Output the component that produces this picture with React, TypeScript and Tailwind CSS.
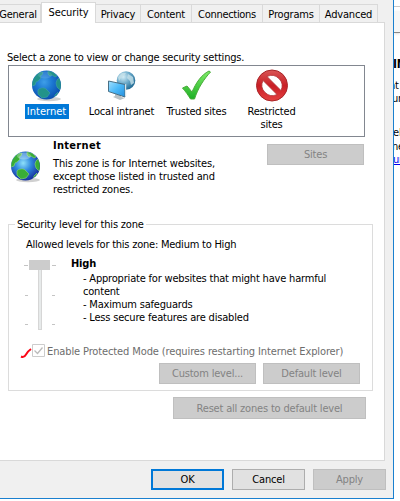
import type { ReactNode } from 'react';

function Button({ className, children }: { className: string; children: ReactNode }) {
  return (
    <button className={`flex items-center justify-center border leading-[13px] ${className}`}>{children}</button>
  );
}

const disabled = 'border-[#bfbfbf] bg-[#cccccc] text-[#838383]';

function Tab({ className, children }: { className: string; children: ReactNode }) {
  return (
    <div className={`flex h-[18px] items-center justify-center border-r border-t border-[#d9d9d9] pt-px leading-[13px] ${className}`}>
      {children}
    </div>
  );
}

function Globe({ id, tint }: { id: string; tint?: boolean }) {
  return (
    <svg width="32" height="32" viewBox="0 0 32 32" className="block">
      <defs>
        <radialGradient id={id} cx="0.42" cy="0.4" r="0.62">
          <stop offset="0" stopColor={tint ? '#3f9fe8' : '#8ee0fa'} />
          <stop offset="0.45" stopColor={tint ? '#1c78d2' : '#3089de'} />
          <stop offset="1" stopColor={tint ? '#0b4fae' : '#162f9c'} />
        </radialGradient>
        <clipPath id={id + 'c'}>
          <circle cx="15.5" cy="15" r="14.3" />
        </clipPath>
      </defs>
      <ellipse cx="18" cy="29" rx="12" ry="2.2" fill="#777" opacity="0.35" />
      <circle cx="15.5" cy="15" r="14.5" fill={`url(#${id})`} />
      <g clipPath={`url(#${id}c)`} fill={tint ? '#23938a' : '#39ad36'} stroke={tint ? '#3fa6a4' : '#91dc72'} strokeWidth="0.6">
        <path d="M1 12C3 6 7 2 12 2l-1 3-2 1 1 2-3 3-2 1-1 3-3 1z" />
        <path d="M17 1l5 1 4 4-2 1-3-2-2 1-2-2z" />
        <path d="M26 10l2-2 3 5v6l-2 1-3-3-1-4z" />
        <path d="M7 20c1-2 6-3 8-1l4 4-3 4-5 1-4-4z" />
        <path d="M24 25l3-3-1 4-3 3z" />
      </g>
      <ellipse cx="14" cy="5" rx="7" ry="3.5" fill="#fff" opacity={tint ? '0.12' : '0.3'} />
    </svg>
  );
}

function Intranet() {
  return (
    <svg width="32" height="32" viewBox="0 0 32 32" className="block">
      <defs>
        <radialGradient id="ig" cx="0.35" cy="0.3" r="0.75">
          <stop offset="0" stopColor="#d5eef7" />
          <stop offset="0.5" stopColor="#6baaca" />
          <stop offset="1" stopColor="#1c6690" />
        </radialGradient>
        <linearGradient id="is" x1="0" y1="0" x2="1" y2="1">
          <stop offset="0" stopColor="#a4e1ff" />
          <stop offset="0.5" stopColor="#4bb9f8" />
          <stop offset="1" stopColor="#258edc" />
        </linearGradient>
      </defs>
      <circle cx="20" cy="10.500" r="9.300" fill="url(#ig)" />
      <path d="M12 7l4-4 4 0-2 3-3 2-2 3zM22 4l5 3 1 6-3 2-1-4-3-3z" fill="#c4e0e9" opacity="0.8" />
      <path d="M9 24l6 1v2l4 1-5 2-7-3 2-1z" fill="#bac2c5" />
      <path d="M2.500 11L19 14.500V27L2.500 21.500z" fill="url(#is)" stroke="#496f85" />
      <path d="M19 14.500l1.200-.7V26L19 27z" fill="#d9e4e8" />
    </svg>
  );
}

function Check() {
  return (
    <svg width="32" height="32" viewBox="0 0 32 32" className="block">
      <defs>
        <linearGradient id="cg" x1="0" y1="0" x2="0" y2="1">
          <stop offset="0" stopColor="#80ed69" />
          <stop offset="1" stopColor="#1caf24" />
        </linearGradient>
      </defs>
      <path d="M1.500 18l4.500-2 5 6C15 13 20 5 28 1l1.500 1C23 9 17 18 13.500 29H9.500C7 25 5 22 1.500 18z" fill="url(#cg)" stroke="#48ac39" strokeWidth="1" />
    </svg>
  );
}

function Restricted() {
  return (
    <svg width="34" height="34" viewBox="0 0 34 34" className="block">
      <defs>
        <linearGradient id="rg" x1="0" y1="0" x2="0" y2="1">
          <stop offset="0" stopColor="#d95656" />
          <stop offset="0.5" stopColor="#c91e25" />
          <stop offset="1" stopColor="#e44140" />
        </linearGradient>
      </defs>
      <circle cx="17" cy="16.500" r="15.500" fill="url(#rg)" stroke="#a92629" />
      <path d="M12 7.500A10.500 10.500 0 0 1 26 21.500zM8 11.500A10.500 10.500 0 0 0 22 25.500z" fill="#fff" stroke="#ae3437" strokeWidth="0.8" />
    </svg>
  );
}

function Slider() {
  return (
    <svg width="34" height="72" viewBox="0 0 34 72" className="block" shapeRendering="crispEdges">
      <path d="M0 5.500h4M28 5.500h4M1 35.500h3M28 35.500h3M1 64.500h3M28 64.500h3" stroke="#c4c4c4" />
      <rect x="14.500" y="5.500" width="3" height="64" fill="#e7eaea" stroke="#d6d6d6" />
      <rect x="5" y="0" width="21" height="10" fill="#cccccc" />
    </svg>
  );
}

export default function App() {
  return (
    <div className="flex h-[501px] w-[400px] overflow-hidden whitespace-nowrap bg-white font-['DejaVu_Sans_Condensed','DejaVu_Sans',sans-serif] text-[11px] leading-[13px] tracking-[-0.19px] text-black">
      <div className="flex h-[499px] w-[394px] shrink-0 flex-col border-b border-r border-[#1a80cf] bg-[#f0f0f0]">
        <div className="flex h-[22px] items-end">
          <Tab className="w-[41px] pr-1">General</Tab>
          <div className="z-10 -mb-px flex h-[21px] w-[55px] items-center justify-center border-x border-t border-[#d9d9d9] bg-white pb-px tracking-[-0.1px]">Security</div>
          <Tab className="w-[45px]">Privacy</Tab>
          <Tab className="w-[51px]">Content</Tab>
          <Tab className="w-[71px] tracking-[-0.3px]">Connections</Tab>
          <Tab className="w-[57px]">Programs</Tab>
          <Tab className="w-[58px]">Advanced</Tab>
        </div>
        <div className="h-[439px] w-[385px] border-b border-r border-t border-[#d9d9d9] bg-white">
          <p className="mt-[28px] pl-[7px]">Select a zone to view or change security settings.</p>
          <div className="ml-2 mt-px flex h-[72px] w-[357px] border border-[#828790] pt-1">
            <div className="flex w-[75px] flex-col items-center">
              <Globe id="g1" tint />
              <span className="mt-0.5 flex h-[15px] w-[44px] items-center justify-center bg-[#0078d7] tracking-normal text-white">Internet</span>
            </div>
            <div className="flex w-[75px] flex-col items-center">
              <Intranet />
              <span className="mt-[3px]">Local intranet</span>
            </div>
            <div className="flex w-[75px] flex-col items-center">
              <Check />
              <span className="mt-[3px]">Trusted sites</span>
            </div>
            <div className="-mt-px flex w-[75px] flex-col items-center">
              <Restricted />
              <span className="mt-0.5 text-center">Restricted<br />sites</span>
            </div>
          </div>
          <div className="flex h-[81px]">
            <div className="w-[53px] pl-[10px] pt-[14px]"><Globe id="g2" /></div>
            <div className="w-[214px] pt-[2px]">
              <p className="font-bold tracking-[0.3px]">Internet</p>
              <p className="mt-[5px] tracking-[-0.14px]">This zone is for Internet websites,<br />except those listed in trusted and<br />restricted zones.</p>
            </div>
            <Button className={`mt-[7px] h-[21px] w-[97px] ${disabled}`}>Sites</Button>
          </div>
          <fieldset className="ml-2 h-[173px] w-[365px] border border-[#dcdcdc]">
            <legend className="ml-[6px] px-[2px]">Security level for this zone</legend>
            <p className="ml-[17px] mt-[7px] tracking-[-0.23px]">Allowed levels for this zone: Medium to High</p>
            <div className="ml-[15px] mt-[6px] flex h-[80px]">
              <div className="w-[47px] pt-[3px]"><Slider /></div>
              <div>
                <p className="font-bold">High</p>
                <p className="ml-3 mt-[2px]">- Appropriate for websites that might have harmful<br />content<br />- Maximum safeguards<br />- Less secure features are disabled</p>
              </div>
            </div>
            <div className="ml-[11px] mt-[7px] flex h-[15px] items-center text-[#6d6d6d]">
              <svg width="12" height="15" viewBox="0 0 12 15"><path d="M1 12.500q3 1.500 5-2t5-5.500" fill="none" stroke="#fb0717" strokeWidth="2" /></svg>
              <svg width="13" height="15" viewBox="0 0 13 15"><path d="M.5.5h12v12H.5z" fill="#fff" stroke="#ccc" /><path d="M2.500 6.500l3 3 5-6" fill="none" stroke="#bbb" strokeWidth="1.300" /></svg>
              <span className="ml-[2px] tracking-[-0.12px]">Enable Protected Mode (requires restarting Internet Explorer)</span>
            </div>
            <div className="ml-[150px] mt-[4px] flex gap-[7px]">
              <Button className={`h-[21px] w-[97px] ${disabled}`}>Custom level...</Button>
              <Button className={`h-[21px] w-[97px] ${disabled}`}>Default level</Button>
            </div>
          </fieldset>
          <Button className={`ml-[173px] mt-[6px] h-[22px] w-[193px] ${disabled}`}>Reset all zones to default level</Button>
        </div>
        <div className="ml-[151px] mt-[8px] flex gap-2">
          <Button className="h-[21px] w-[73px] border-2 border-[#0078d7] bg-[#e1e1e1]">OK</Button>
          <Button className="h-[21px] w-[73px] border-[#adadad] bg-[#e1e1e1]">Cancel</Button>
          <Button className={`h-[21px] w-[73px] ${disabled}`}>Apply</Button>
        </div>
      </div>
      <div className="w-[6px] overflow-hidden">
        <div className="h-[7px] border-b border-[#c9c9c9]" />
        <div className="mt-[4px] h-[22px] border-b border-[#888] bg-[#f6f6f6] shadow-sm" />
        <div className="mt-[25px] -ml-px text-[12px] font-bold">IN</div>
        <div className="mt-[8px] -ml-[5px]">nt</div>
        <div className="-ml-[2px]">ur</div>
        <div className="mt-[21px] -ml-px">el</div>
        <div className="mt-px -ml-[2px]">ne</div>
        <div className="-ml-px text-[#0000ee] underline">ur</div>
      </div>
    </div>
  );
}
